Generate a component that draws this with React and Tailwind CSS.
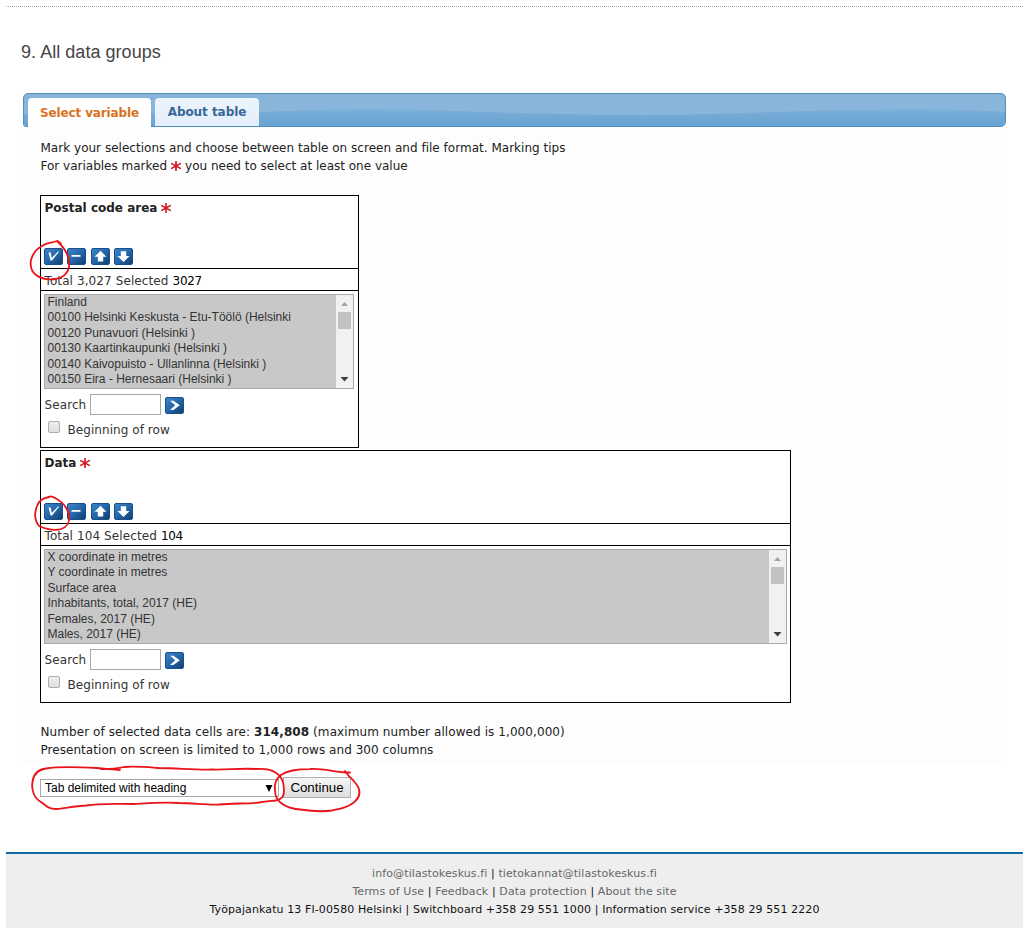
import React from "react";

function Star({ className = "" }) {
  return (
    <svg viewBox="0 0 12 12" className={"inline-block h-3 w-3 shrink-0 " + className}>
      <path d="M6 1V11M1.2 3.4l9.6 5.2M1.2 8.6l9.6-5.2" stroke="#d0121f" strokeWidth="1.6" fill="none" />
    </svg>
  );
}

const glyphs = {
  check: <path d="M4.5 4.5h2.2l1 5.4L14 3.5h1.3L8 12.5H6.6z" fill="#fff" />,
  minus: <path d="M4.5 7h9v1.8h-9z" fill="#fff" />,
  up: <path d="M9.5 2.8l6 6h-3.3v4.8H6.8V8.8H3.5z" fill="#fff" />,
  down: <path d="M9.5 14l6-6h-3.3V3.2H6.8V8H3.5z" fill="#fff" />,
  go: <path d="M5 3.8h3.4l6.4 4.5-6.4 4.6H5l5.2-4.6z" fill="#fff" />,
};

function IconButton({ kind }) {
  return (
    <button className="block h-[17px] w-[19px] shrink-0 overflow-hidden rounded-[2px] border border-[#17508a] bg-linear-to-br from-[#3d84c6] via-[#2467aa] to-[#133f6c]">
      <svg viewBox="1 1 17 15" className="block h-[15px] w-[17px]">{glyphs[kind]}</svg>
    </button>
  );
}

function Scrollbar() {
  return (
    <div className="flex w-[17px] shrink-0 flex-col items-center bg-[#f1f1f1]">
      <svg viewBox="0 0 17 17" className="h-[17px] w-[17px]"><path d="M5 11l3.5-4 3.5 4z" fill="#a3a3a3" /></svg>
      <div className="h-[17px] w-[13px] bg-[#c1c1c1]" />
      <svg viewBox="0 0 17 17" className="mt-auto h-[17px] w-[17px]"><path d="M4.500 6h8l-4 4.500z" fill="#404040" /></svg>
    </div>
  );
}

function VariableBox({ title, total, selected, items, className, listClass }) {
  return (
    <section className={"flex flex-col border border-black bg-white " + className}>
      <div className="flex h-[72px] flex-col justify-between pl-[3.500px]">
        <div className="flex h-[24px] items-center gap-[3px]">
          <h2 className="text-[12px] leading-[18px] font-bold tracking-[0.01px] text-[#222]">{title}</h2>
          <Star />
        </div>
        <div className="-ml-[0.5px] mb-[3px] flex gap-[4.300px]">
          <IconButton kind="check" />
          <IconButton kind="minus" />
          <IconButton kind="up" />
          <IconButton kind="down" />
        </div>
      </div>
      <div className="flex h-[23px] items-center gap-1 border-y border-black pt-[3px] pl-[3.500px] text-[12px] leading-[18px] tracking-[0.1px]">
        <span className="text-[#333]">Total {total} Selected</span>
        <span className="tracking-[-0.3px] text-black">{selected}</span>
      </div>
      <div className={"mt-[3px] ml-[3px] flex h-[95px] shrink-0 border border-[#a9a9a9] bg-[#c8c8c8] " + listClass}>
        <ul className="min-w-0 flex-1 overflow-hidden pl-[2.5px] font-['Liberation_Sans',sans-serif] text-[12px] leading-[15.45px] text-[#333]">
          {items.map((t) => <li key={t} className="whitespace-nowrap">{t}</li>)}
        </ul>
        <Scrollbar />
      </div>
      <div className="mt-[5px] flex h-[21px] items-center pl-[3px]">
        <span className="w-[46px] pt-px pl-[0.5px] text-[12px] tracking-[0.1px] text-[#333]">Search</span>
        <input className="h-[21px] w-[71px] border border-[#a9a9a9] bg-white" />
        <span className="ml-1 pt-[1px]"><IconButton kind="go" /></span>
      </div>
      <div className="mt-[6px] flex h-[18px] pl-[7px]">
        <span className="h-3 w-3 rounded-[2px] border border-[#adadad] bg-linear-to-b from-[#f0f0f0] to-[#dedede]" />
        <span className="ml-[7.500px] text-[12px] leading-[18px] tracking-[0.06px] text-[#333]">Beginning of row</span>
      </div>
    </section>
  );
}

const areas = [
  "Finland",
  "00100 Helsinki Keskusta - Etu-Töölö (Helsinki",
  "00120 Punavuori (Helsinki )",
  "00130 Kaartinkaupunki (Helsinki )",
  "00140 Kaivopuisto - Ullanlinna (Helsinki )",
  "00150 Eira - Hernesaari (Helsinki )",
];
const data = [
  "X coordinate in metres",
  "Y coordinate in metres",
  "Surface area",
  "Inhabitants, total, 2017 (HE)",
  "Females, 2017 (HE)",
  "Males, 2017 (HE)",
];

function Annotations() {
  return (
    <svg viewBox="0 0 1033 928" className="pointer-events-none absolute top-0 left-0 h-[928px] w-[1033px]" fill="none" stroke="#e8141a" strokeWidth="1.8" strokeLinecap="round" strokeLinejoin="round">
      <path d="M61 244C59 242 58 241 57 241C52 243 46 243 42 246C36 249 33 253 31 260C30 266 32 272 36 275C41 279 48 280 56 279C63 278 68 273 69 267C70 259 68 251 57 241" />
      <path d="M55 498C52 496 50 496 49 497C43 498 39 500 37 506C34 514 35 521 39 526C46 529 54 531 61 529C67 527 70 522 69 516C68 508 64 502 53 497" />
      <path d="M120 770C112 769 104 769 97 768C80 767 60 766 46 768.500C35 770 33 777 32.500 782C31 791 35 799 41 802C46 806 49 809 56 809C66 808 75 806 86 805.500C102 803 118 804 133 804C150 803 165 802 179 803C193 803 206 805 219 804.500C233 803 246 804 259 802.500C266 801 272 801 276 800.500C282 799 284 797 284 790C284 783 282 777 277 773.500C271 769 265 768.500 256 769C240 768 227 770 212 769.500C194 770 177 768 159 768C145 767 133 766 124 767C116 769 108 769 101 769" />
      <path d="M350 772.500C337 773 325 768 310 769C297 769 288 770 281 775C276 779 274 784 275 790C275 795 277 800 281 803C286 807 294 809 300 809.500C310 811 322 812 332 810.500C339 809 345 808 350 805C357 801 361 796 359 789C358 785 355 783 353 780C349 777 347 774 345 771" />
    </svg>
  );
}

export default function App() {
  return (
    <div className="relative flex h-[928px] w-[1033px] flex-col overflow-hidden bg-white font-['DejaVu_Sans',sans-serif]">
      <div className="mt-[6px] mr-[10px] ml-[6px] h-0 shrink-0 border-t border-dotted border-[#a8a8a8]" />
      <h1 className="mt-[33px] ml-[21px] h-6 shrink-0 font-['Liberation_Sans',sans-serif] text-[18px] leading-6 tracking-[0.04px] text-[#444]">9. All data groups</h1>
      <div className="relative mt-[29px] ml-[23px] h-[34px] w-[983px] shrink-0 rounded-[5px] rounded-bl-[3px] border border-[#4f8fbd] bg-linear-to-b from-[#86b4da] to-[#8db8da]">
        <svg viewBox="0 0 981 32" preserveAspectRatio="none" className="absolute inset-0 h-full w-full rounded-[4px]">
          <defs>
            <linearGradient id="wave" x1="0" y1="0" x2="0" y2="1">
              <stop offset="0" stopColor="#7aaed7" />
              <stop offset="1" stopColor="#68a3d2" />
            </linearGradient>
          </defs>
          <path d="M0 20C90 19 180 19 236 18C300 15 350 15 400 16C470 18 540 21 620 21C700 21 770 16 850 16C900 15 950 16 981 18V32H0z" fill="url(#wave)" />
        </svg>
        <div className="relative flex h-full gap-1 pt-1 pl-1 text-[12px] font-bold">
          <div className="-mb-px flex w-[123px] items-center justify-center rounded-t-[4px] bg-white tracking-[-0.12px] text-[#d9721c]">Select variable</div>
          <div className="flex w-[104px] items-center justify-center rounded-t-[4px] bg-linear-to-b from-[#edf4fc] to-[#e3effb] tracking-[-0.05px] text-[#376796]">About table</div>
        </div>
      </div>
      <main className="ml-[22px] flex h-[638px] w-[984px] shrink-0 flex-col bg-[#fdfdfd] pl-[18px] text-[#222]">
        <p className="mt-3 pl-[0.5px] text-[12px] leading-[18px] tracking-[0.02px]">Mark your selections and choose between table on screen and file format. Marking tips</p>
        <p className="flex h-[18px] items-center pl-[0.5px] text-[12px] leading-[18px]">
          <span>For variables marked</span><Star className="mx-[3px]" /><span>you need to select at least one value</span>
        </p>
        <VariableBox title="Postal code area" total="3,027" selected="3027" items={areas} className="mt-5 h-[253px] w-[319px] shrink-0" listClass="mr-1" />
        <VariableBox title="Data" total="104" selected="104" items={data} className="mt-[2px] h-[253px] w-[751px] shrink-0" listClass="mr-[3px]" />
        <p className="mt-5 pl-[0.5px] text-[12px] leading-[18px] tracking-[0.08px]">Number of selected data cells are: <b>314,808</b> (maximum number allowed is 1,000,000)</p>
        <p className="pl-[0.5px] text-[12px] leading-[18px] tracking-[0.05px]">Presentation on screen is limited to 1,000 rows and 300 columns</p>
      </main>
      <div className="mt-[12px] ml-[40px] flex h-[21px] shrink-0 items-center gap-1 font-['Liberation_Sans',sans-serif]">
        <div className="flex h-[18px] w-[239px] items-center justify-between border border-[#a9a9a9] bg-white pr-[5px] pl-1 text-[12px] text-black">
          <span>Tab delimited with heading</span>
          <svg viewBox="0 0 8 8" className="h-2 w-2"><path d="M.5 1h7L4 8z" fill="#000" /></svg>
        </div>
        <button className="h-[21px] w-[68px] border border-[#b0b0b0] bg-linear-to-b from-[#f6f6f6] to-[#dddddd] text-[13.3px] leading-[19px] text-black">Continue</button>
      </div>
      <footer className="mt-auto mr-[10px] ml-[6px] flex h-[76px] shrink-0 flex-col items-center border-t-2 border-[#0f6ca5] bg-[#eeeeee] pt-[11px] text-[11px] leading-[18px] tracking-[0.1px] whitespace-pre text-[#111]">
        <p><span className="text-[#666]">info@tilastokeskus.fi</span> | <span className="text-[#666]">tietokannat@tilastokeskus.fi</span></p>
        <p><span className="text-[#666]">Terms of Use</span> | <span className="text-[#666]">Feedback</span> | <span className="text-[#666]">Data protection</span> | <span className="text-[#666]">About the site</span></p>
        <p>Työpajankatu 13 FI-00580 Helsinki | Switchboard +358 29 551 1000 | Information service +358 29 551 2220</p>
      </footer>
      <Annotations />
    </div>
  );
}
